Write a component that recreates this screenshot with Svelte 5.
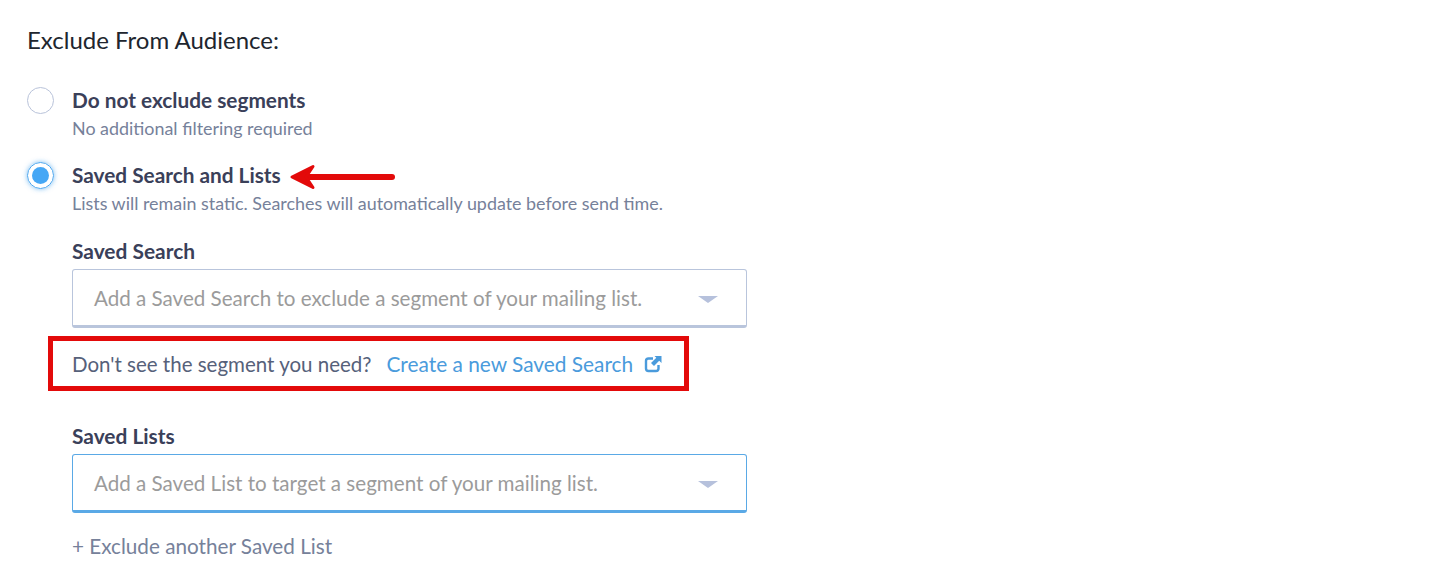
<script>
  let mode = $state('saved');
</script>

<div class="page">
  <h2>Exclude From Audience:</h2>

  <div class="option first">
    <span class="radio"></span>
    <div class="copy">
      <div class="name">Do not exclude segments</div>
      <div class="hint">No additional filtering required</div>
    </div>
  </div>

  <div class="option second">
    <span class="radio on"><span class="pip"></span></span>
    <div class="copy">
      <div class="name-row">
        <div class="name">Saved Search and Lists</div>
        <svg class="arrow" width="112" height="28" viewBox="0 0 112 28">
          <path d="M12 15H106" stroke="#e30a0a" stroke-width="6" stroke-linecap="round" fill="none" />
          <path d="M6 15L27 4.500L20 15L27 25.500Z" fill="#e30a0a" stroke="#e30a0a" stroke-width="3" stroke-linejoin="round" />
        </svg>
      </div>
      <div class="hint">Lists will remain static. Searches will automatically update before send time.</div>
    </div>
  </div>

  <div class="fields">
    <div class="label">Saved Search</div>
    <div class="select">
      <span>Add a Saved Search to exclude a segment of your mailing list.</span>
      <i class="caret"></i>
    </div>

    <div class="callout">
      <span class="ask">Don't see the segment you need?</span>
      <a href="#new">Create a new Saved Search</a>
      <svg class="ext" width="18" height="18" viewBox="0 0 18 18">
        <path d="M9 3.500H4.500A2.500 2.500 0 0 0 2 6v7.500A2.500 2.500 0 0 0 4.500 16H12a2.500 2.500 0 0 0 2.500-2.500V10" stroke="#4a9bdc" stroke-width="2.400" fill="none" />
        <path d="M10.500 1H17.500V8L15.200 5.700L10 11L7 8L12.300 2.800Z" fill="#4a9bdc" />
      </svg>
    </div>

    <div class="label lists">Saved Lists</div>
    <div class="select focus">
      <span>Add a Saved List to target a segment of your mailing list.</span>
      <i class="caret"></i>
    </div>

    <div class="more">+ Exclude another Saved List</div>
  </div>
</div>

<style>
  :global(body) {
    margin: 0;
    background: #fff;
  }

  .page {
    box-sizing: border-box;
    height: 574px;
    overflow: hidden;
    padding: 26px 0 0 27px;
    font-family: Lato, sans-serif;
    color: #3a4059;
  }

  h2 {
    margin: 0;
    font-size: 24px;
    line-height: 28px;
    font-weight: 400;
    color: #20252e;
  }

  .option {
    display: flex;
    gap: 18px;
  }

  .option.first {
    margin-top: 32px;
  }

  .option.second {
    margin-top: 19px;
  }

  .radio {
    box-sizing: border-box;
    flex: none;
    width: 27px;
    height: 27px;
    border: 1px solid #b9c3da;
    border-radius: 50%;
    margin-top: 1px;
    display: flex;
    align-items: center;
    justify-content: center;
  }

  .radio.on {
    border-color: #4aa5ee;
    box-shadow: 0 0 5px rgba(74, 165, 238, 0.7);
  }

  .pip {
    width: 17px;
    height: 17px;
    border-radius: 50%;
    background: #45a7f5;
  }

  .name-row {
    display: flex;
    align-items: flex-start;
  }

  .name {
    font-size: 20.800px;
    line-height: 28px;
    font-weight: 700;
    color: #3a4059;
  }

  .arrow {
    margin-left: 5px;
    margin-top: 1px;
    margin-bottom: -1px;
  }

  .hint {
    font-size: 17.900px;
    line-height: 28px;
    color: #76819a;
  }

  .fields {
    margin: 20px 0 0 45px;
    width: 675px;
  }

  .label {
    font-size: 20.900px;
    line-height: 28px;
    font-weight: 700;
    color: #3a4059;
  }

  .label.lists {
    margin-top: 31px;
  }

  .select {
    box-sizing: border-box;
    height: 59px;
    margin-top: 4px;
    padding: 0 28px 0 21px;
    display: flex;
    align-items: center;
    justify-content: space-between;
    border: 1px solid #b9c5dc;
    border-bottom-width: 3px;
    border-radius: 3px;
    font-size: 20.600px;
    color: #9b9b9b;
  }

  .select.focus {
    border-color: #5aa9e6;
  }

  .caret {
    width: 0;
    height: 0;
    margin-top: 4px;
    border-left: 10px solid transparent;
    border-right: 10px solid transparent;
    border-top: 7px solid #b6c1dc;
  }

  .callout {
    box-sizing: border-box;
    width: 641px;
    height: 55px;
    margin: 8px 0 0 -24px;
    padding-left: 19px;
    display: flex;
    align-items: center;
    border: 5px solid #e30a0a;
    font-size: 20.500px;
  }

  .ask {
    color: #56617a;
  }

  .callout a {
    margin-left: 15px;
    font-size: 20.850px;
    color: #4a9bdc;
    text-decoration: none;
  }

  .ext {
    margin-left: 11px;
  }

  .more {
    margin-top: 19px;
    font-size: 20.700px;
    line-height: 28px;
    color: #76819a;
  }
</style>
